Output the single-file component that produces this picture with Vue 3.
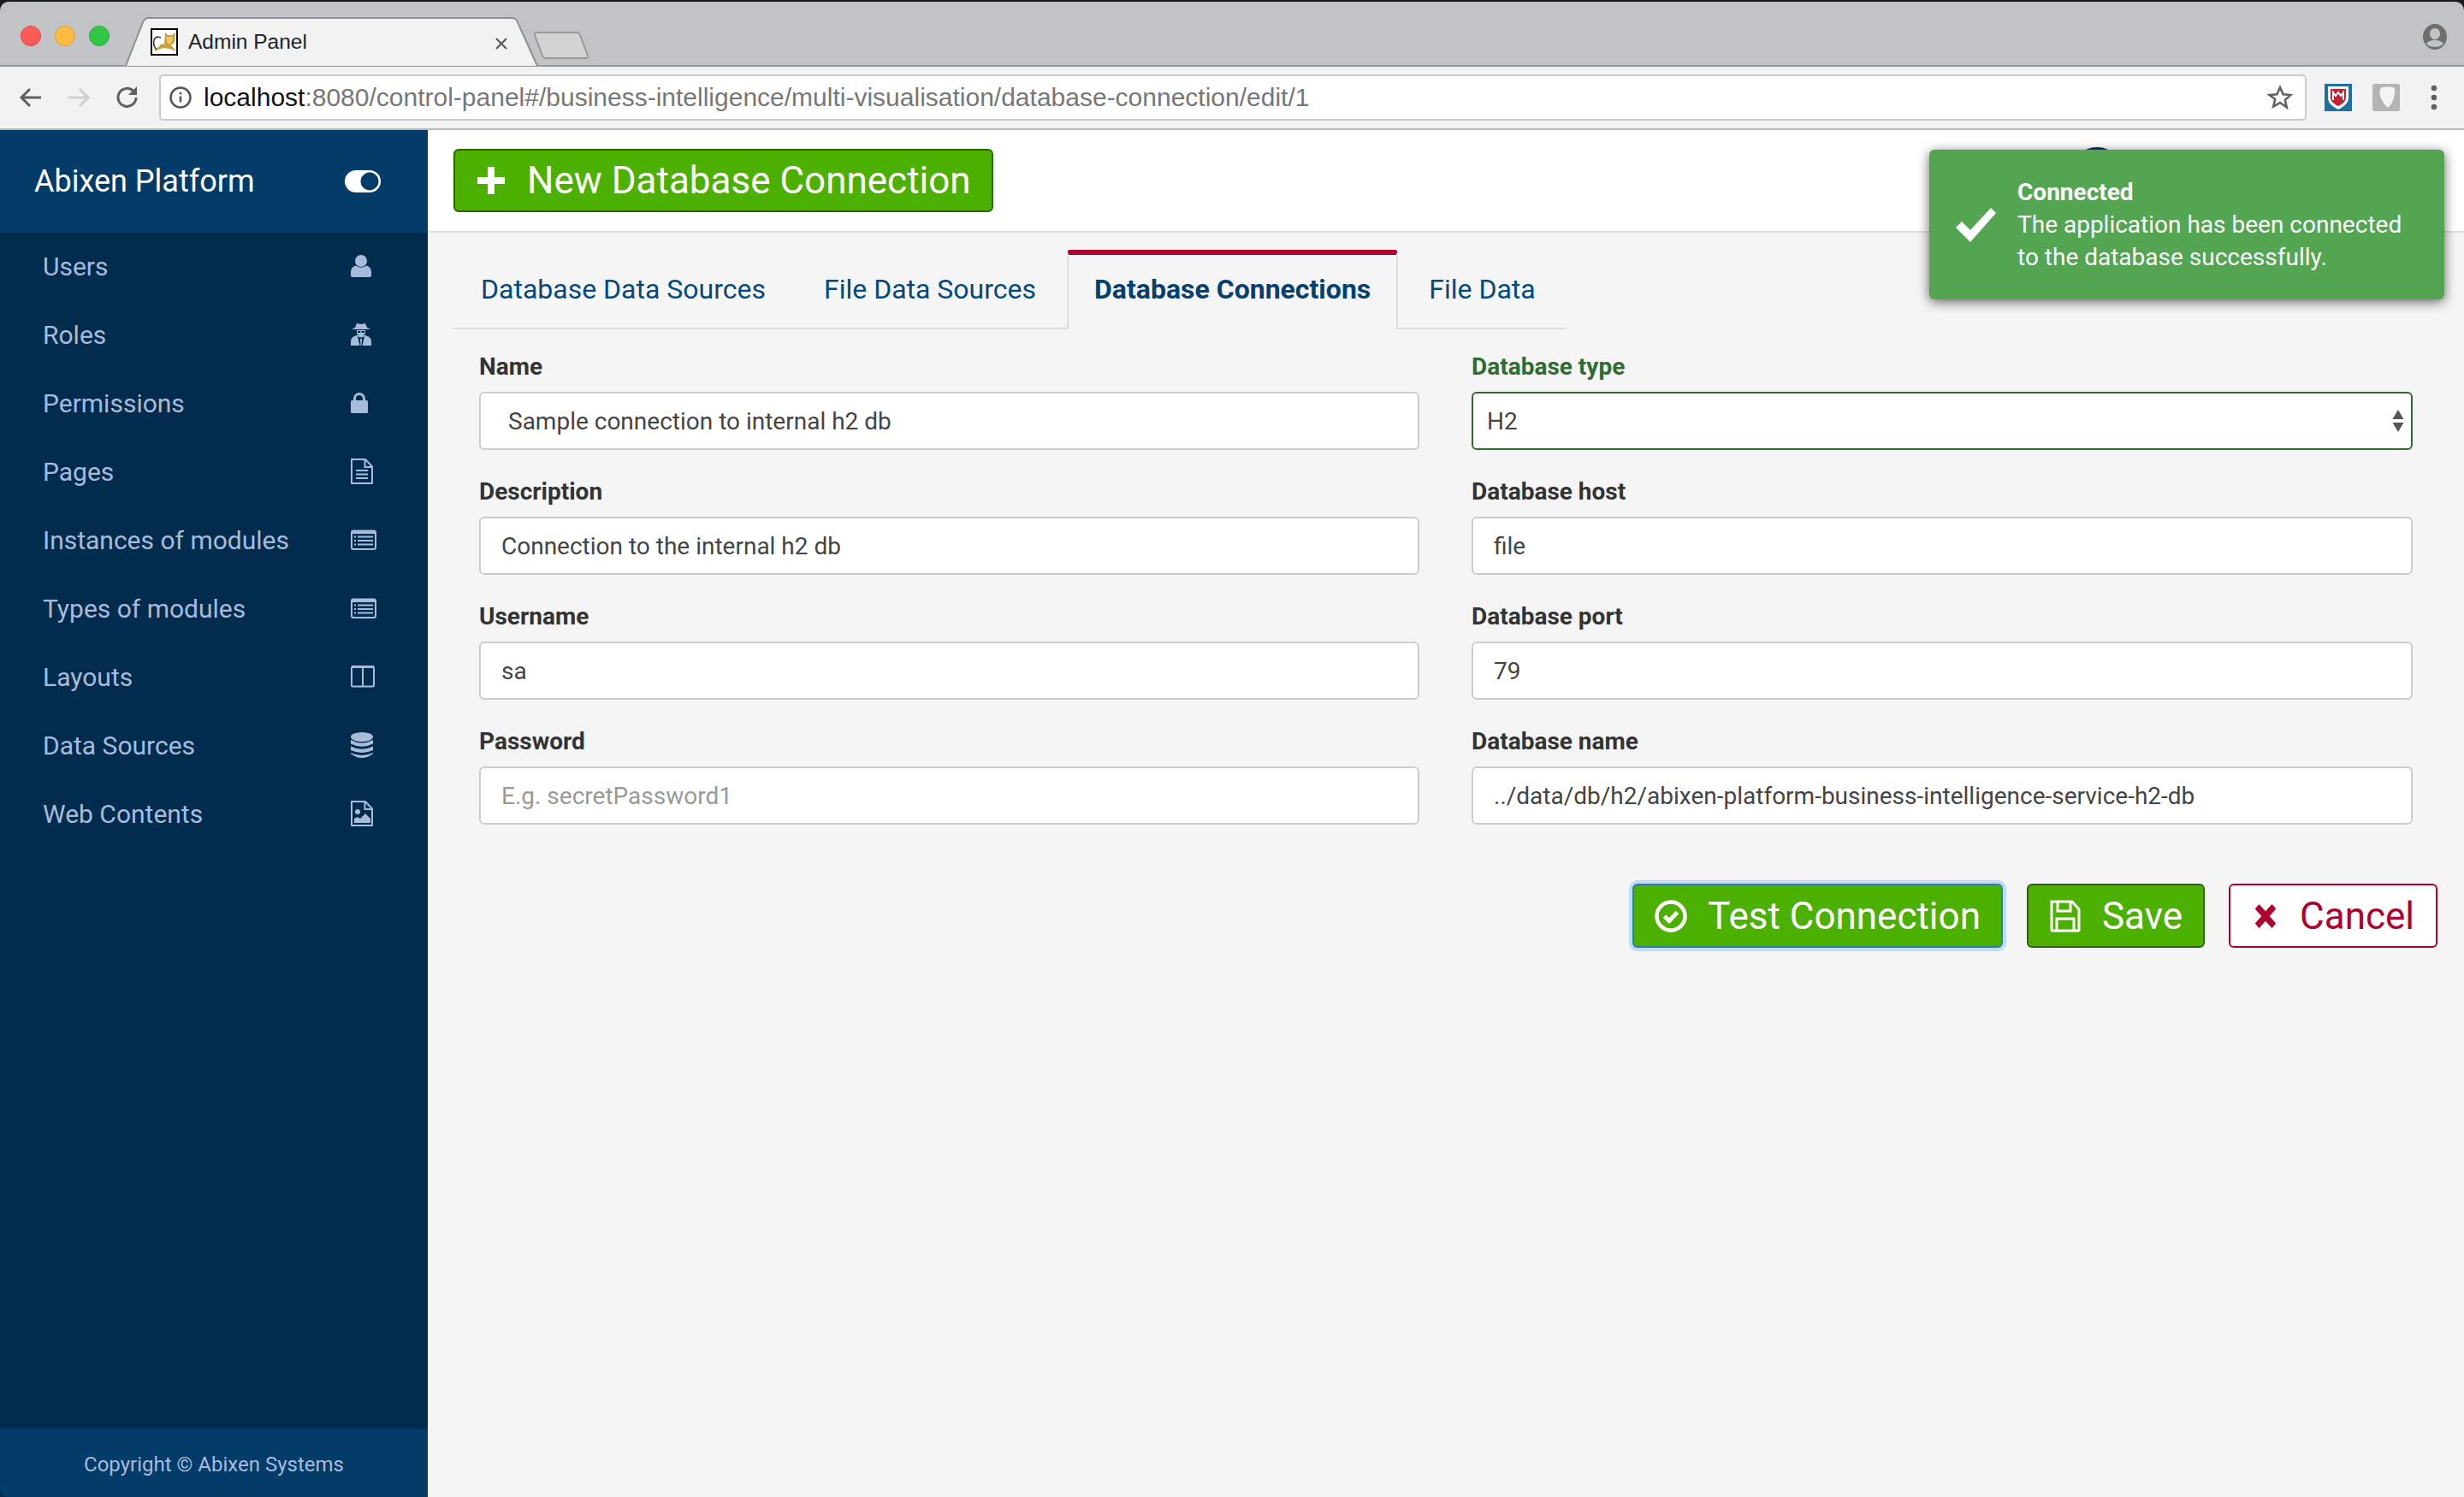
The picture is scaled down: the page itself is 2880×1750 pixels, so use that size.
<template>
  <div class="window">
    <div class="tabstrip">
      <div class="lights">
        <span class="light red"></span>
        <span class="light yellow"></span>
        <span class="light green"></span>
      </div>
      <div class="tab">
        <svg class="tab-shape" width="490" height="58" viewBox="0 0 490 58">
          <path d="M1 57 L21 6 Q23 1 28 1 L452 1 Q457 1 459 6 L482 57" fill="#f2f2f2" stroke="#8f9094" stroke-width="2" />
        </svg>
        <svg class="favicon" width="32" height="32" viewBox="0 0 32 32">
          <rect x="1" y="1" width="30" height="30" fill="#fff" stroke="#000" stroke-width="2" />
          <path d="M4 27L13 18 16 19 17 5 20 8H25L29 5 28 16 24 20 30 27 22 24 15 23 9 25Z" fill="#c9a03c" />
          <path d="M18 10h8l-1 6-3 3-3-3z" fill="#eec65a" />
          <path d="M7 25C2 20 3 11 8 10L12 11" fill="none" stroke="#333" stroke-width="1.500" />
        </svg>
        <span class="tab-title">Admin Panel</span>
        <svg class="tab-close" width="16" height="16" viewBox="0 0 16 16">
          <path d="M2 2l12 12M14 2L2 14" stroke="#555" stroke-width="2" />
        </svg>
      </div>
      <svg class="newtab" width="66" height="34" viewBox="0 0 66 34">
        <path d="M2 5Q1 2 5 2L51 2Q54 2 55 5L64 29Q65 32 61 32L15 32Q12 32 11 29Z" fill="#d2d3d5" stroke="#97989c" stroke-width="2" />
      </svg>
      <svg class="profile" width="30" height="32" viewBox="0 0 30 32">
        <path fill="#6e6e70" fill-rule="evenodd" d="M15 1C23 1 29 8 29 16S23 31 15 31 1 24 1 16 7 1 15 1ZM15 6a6 6.500 0 1 0 .01 0ZM15 20C10 20 6 22 5 24 8 27 11 28 15 28S22 27 25 24C24 22 20 20 15 20Z" />
      </svg>
    </div>

    <div class="toolbar">
      <svg class="tool" width="28" height="28" viewBox="0 0 28 28">
        <path d="M26 14H4M13 4L3 14l10 10" fill="none" stroke="#5f6063" stroke-width="3" />
      </svg>
      <svg class="tool" width="28" height="28" viewBox="0 0 28 28">
        <path d="M2 14h22M15 4l10 10-10 10" fill="none" stroke="#cfcfcf" stroke-width="3" />
      </svg>
      <svg class="tool" width="30" height="30" viewBox="0 0 30 30">
        <path d="M25 15a10.500 10.500 0 1 1-3-7.500" fill="none" stroke="#5f6063" stroke-width="3" />
        <path d="M26 2v10H16z" fill="#5f6063" />
      </svg>
      <div class="omnibox">
        <svg width="26" height="26" viewBox="0 0 26 26">
          <circle cx="13" cy="13" r="11.500" fill="none" stroke="#555" stroke-width="2.500" />
          <path d="M13 11.500v7M13 7v2.500" stroke="#555" stroke-width="2.500" />
        </svg>
        <span class="url"><b>localhost</b>:8080/control-panel#/business-intelligence/multi-visualisation/database-connection/edit/1</span>
        <svg class="star" width="30" height="30" viewBox="0 0 30 30">
          <path d="M15 3l3.600 8.200 8.900.800-6.700 5.900 2 8.700L15 21.100l-7.800 4.500 2-8.700L2.500 12l8.900-.800z" fill="none" stroke="#5f6063" stroke-width="2.500" />
        </svg>
      </div>
      <svg class="ext" width="32" height="32" viewBox="0 0 32 32">
        <rect width="32" height="32" fill="#1f6f9f" />
        <path d="M4 3h24v13c0 7-6 11-12 14C10 27 4 23 4 16z" fill="#fff" />
        <path d="M7 6h18v10c0 5-5 8-9 10-4-2-9-5-9-10z" fill="#c01f35" />
        <path d="M10 19v-9l3 4 3-4 3 4 3-4v9" fill="none" stroke="#fff" stroke-width="2" />
      </svg>
      <svg class="ext" width="32" height="32" viewBox="0 0 32 32">
        <rect width="32" height="32" rx="3" fill="#b4b4b4" />
        <path d="M11 4C17 3 25 3 26 6c1 8-3 18-8 22C11 22 5 9 11 4z" fill="#f4f4f4" />
      </svg>
      <svg class="dots" width="8" height="30" viewBox="0 0 8 30">
        <circle cx="4" cy="4" r="3.300" fill="#5f6063" />
        <circle cx="4" cy="15" r="3.300" fill="#5f6063" />
        <circle cx="4" cy="26" r="3.300" fill="#5f6063" />
      </svg>
    </div>

    <div class="app">
      <aside class="sidebar">
        <div class="brand">
          <span>Abixen Platform</span>
          <svg width="42" height="26" viewBox="0 0 42 26">
            <path fill="#fff" fill-rule="evenodd" d="M13 0H29A13 13 0 0 1 29 26H13A13 13 0 0 1 13 0ZM29 2.500a10.500 10.500 0 1 0 .01 0Z" />
          </svg>
        </div>
        <nav class="menu">
          <a v-for="item in menu" :key="item.label" class="menu-item">
            <span>{{ item.label }}</span>
            <svg class="menu-icon" width="30" height="30" viewBox="0 0 30 30" v-html="icons[item.icon]"></svg>
          </a>
        </nav>
        <div class="copyright">Copyright © Abixen Systems</div>
      </aside>

      <main class="main">
        <header class="topbar">
          <button class="btn primary big">
            <svg width="36" height="36" viewBox="0 0 36 36">
              <path d="M14 2h8v12h12v8H22v12h-8V22H2v-8h12z" fill="#fff" />
            </svg>
            New Database Connection
          </button>
          <span class="avatar"></span>
        </header>

        <section class="content">
          <div class="tabs">
            <a v-for="t in tabs" :key="t" class="tab-link" :class="{ active: t === 'Database Connections' }">{{ t }}</a>
          </div>

          <form class="form" @submit.prevent>
            <div v-for="f in fields" :key="f.label" class="field" :class="{ ok: f.select }">
              <label>{{ f.label }}</label>
              <div v-if="f.select" class="select">
                <select>
                  <option>{{ f.value }}</option>
                </select>
                <svg width="14" height="26" viewBox="0 0 14 26">
                  <path d="M7 0l6.500 11H.5zM7 26l6.500-11H.5z" fill="#555" />
                </svg>
              </div>
              <input v-else type="text" :class="{ indent: f.indent }" :value="f.value" :placeholder="f.placeholder" />
            </div>
          </form>

          <div class="actions">
            <button class="btn primary focused">
              <svg width="38" height="38" viewBox="0 0 38 38">
                <circle cx="19" cy="19" r="16.500" fill="none" stroke="#fff" stroke-width="4.500" />
                <path d="M11.500 19l5.500 5.500 9.500-10" fill="none" stroke="#fff" stroke-width="5" />
              </svg>
              Test Connection
            </button>
            <button class="btn primary">
              <svg width="38" height="38" viewBox="0 0 38 38">
                <path d="M3 2H27L35 11V35Q35 36 34 36H4Q3 36 3 35Z" fill="none" stroke="#fff" stroke-width="3" />
                <path d="M10 3V13H25V3M9 36V22H29V36" fill="none" stroke="#fff" stroke-width="3" />
              </svg>
              Save
            </button>
            <button class="btn cancel">
              <svg width="32" height="32" viewBox="0 0 32 34">
                <path d="M3 8L8 2 16 11 24 2 29 8 21 17 29 26 24 32 16 23 8 32 3 26 11 17Z" fill="#b0002e" />
              </svg>
              Cancel
            </button>
          </div>
        </section>

        <div class="toast">
          <svg width="50" height="42" viewBox="0 0 50 42">
            <path d="M2 24l7-7 10 10L43 1l6 6-30 34z" fill="#fff" />
          </svg>
          <div class="toast-text">
            <strong>Connected</strong>
            <p>The application has been connected<br />to the database successfully.</p>
          </div>
        </div>
      </main>
    </div>
  </div>
</template>

<script setup>
const menu = [
  { label: 'Users', icon: 'user' },
  { label: 'Roles', icon: 'spy' },
  { label: 'Permissions', icon: 'lock' },
  { label: 'Pages', icon: 'file' },
  { label: 'Instances of modules', icon: 'list' },
  { label: 'Types of modules', icon: 'list' },
  { label: 'Layouts', icon: 'columns' },
  { label: 'Data Sources', icon: 'database' },
  { label: 'Web Contents', icon: 'image' }
]

// wszystkie ikony w viewBox 30x30, wysrodkowane w pionie
const icons = {
  user: '<circle cx="12" cy="9" r="7" fill="currentColor"/><path d="M0 26Q0 28 2 28H22Q24 28 24 26V22Q24 16 18 14.500Q12 19 6 14.500Q0 16 0 22Z" fill="currentColor"/>',
  spy: '<path d="M5 7L7 2L12 3L17 2L19 7L23 9H1Z" fill="currentColor"/><path d="M7 10H17V13Q17 16 12 16.500Q7 16 7 13Z" fill="currentColor"/><path d="M8 11H11.300V13H8ZM12.700 11H16V13H12.700Z" fill="#012c4e"/><path d="M0 28V23Q0 18 7 16H17Q24 18 24 23V28Z" fill="currentColor"/><path d="M8 17L10.500 28H11.500L11 20H13L12.500 28H13.500L16 17L13 18.500H11Z" fill="#012c4e"/>',
  lock: '<path d="M4.500 14V10A5.500 5.500 0 0 1 15.500 10V14" fill="none" stroke="currentColor" stroke-width="3"/><rect x="0" y="12" width="20" height="15" rx="1.500" fill="currentColor"/>',
  file: '<path d="M1 1H17L25 9.500V29H1Z" fill="none" stroke="currentColor" stroke-width="2" stroke-linejoin="round"/><path d="M16.500 1V10H25M6 14H20M6 18.500H20M6 23H20" fill="none" stroke="currentColor" stroke-width="2"/>',
  list: '<rect x="1" y="4.500" width="28" height="21.500" rx="2" fill="none" stroke="currentColor" stroke-width="2"/><rect x="1" y="4" width="28" height="4" fill="currentColor"/><path d="M8 11.500H26M8 16H26M8 20.500H26M4 11.500H6M4 16H6M4 20.500H6" fill="none" stroke="currentColor" stroke-width="2"/>',
  columns: '<rect x="1" y="3.500" width="26" height="23" rx="1.500" fill="none" stroke="currentColor" stroke-width="2"/><path d="M14 3.500V26.500" stroke="currentColor" stroke-width="2"/><path d="M1 3.500H27" stroke="currentColor" stroke-width="3"/>',
  database: '<ellipse cx="13" cy="5.500" rx="13" ry="5.500" fill="currentColor"/><path d="M0 9Q13 16 26 9V13.500Q13 20 0 13.500ZM0 16.500Q13 23 26 16.500V21Q13 27 0 21ZM0 24Q13 30 26 24V25Q20 30 13 30T0 25Z" fill="currentColor"/>',
  image: '<path d="M1 1H17L25 9.500V29H1Z" fill="none" stroke="currentColor" stroke-width="2" stroke-linejoin="round"/><path d="M16.500 1V10H25" fill="none" stroke="currentColor" stroke-width="2"/><circle cx="8" cy="13" r="3" fill="currentColor"/><path d="M4 26V21L8 19 11 21 17 15 23 21V26Z" fill="currentColor"/>'
}

const tabs = ['Database Data Sources', 'File Data Sources', 'Database Connections', 'File Data']

// kolejnosc: lewa i prawa kolumna na przemian, tak jak w siatce formularza
const fields = [
  { label: 'Name', value: 'Sample connection to internal h2 db', indent: true },
  { label: 'Database type', value: 'H2', select: true },
  { label: 'Description', value: 'Connection to the internal h2 db' },
  { label: 'Database host', value: 'file' },
  { label: 'Username', value: 'sa' },
  { label: 'Database port', value: '79' },
  { label: 'Password', value: '', placeholder: 'E.g. secretPassword1' },
  { label: 'Database name', value: '../data/db/h2/abixen-platform-business-intelligence-service-h2-db' }
]
</script>

<style>
html,
body {
  margin: 0;
  background: #1b1b1f;
}
</style>

<style scoped>
.window {
  width: 2880px;
  height: 1750px;
  padding-top: 2px;
  box-sizing: border-box;
  display: flex;
  flex-direction: column;
  font-family: Roboto, "Liberation Sans", sans-serif;
  overflow: hidden;
}

.tabstrip {
  height: 76px;
  flex: none;
  position: relative;
  display: flex;
  box-sizing: border-box;
  background: #c2c3c6;
  border-bottom: 2px solid #97989c;
  border-radius: 10px 10px 0 0;
}

.lights {
  display: flex;
  gap: 16px;
  margin: 28px 0 0 24px;
}

.light {
  width: 24px;
  height: 24px;
  border-radius: 50%;
  box-sizing: border-box;
}

.red { background: #fc5b57; border: 1px solid #df4744; }
.yellow { background: #fdbc40; border: 1px solid #dea034; }
.green { background: #33c748; border: 1px solid #27aa35; }

.tab {
  width: 482px;
  height: 58px;
  margin: 18px 0 0 18px;
  position: relative;
  display: flex;
  align-items: center;
  padding: 0 0 0 30px;
  box-sizing: border-box;
}

.tab-shape {
  position: absolute;
  left: 0;
  top: 0;
}

.favicon,
.tab-title {
  position: relative;
}

.tab-title {
  margin-left: 12px;
  font: 24.500px "Liberation Sans", sans-serif;
  color: #222;
}

.tab-close {
  position: absolute;
  left: 432px;
  top: 23px;
}

.newtab {
  margin: 34px 0 0 -5px;
}

.profile {
  position: absolute;
  right: 19px;
  top: 25px;
}

.toolbar {
  height: 74px;
  flex: none;
  box-sizing: border-box;
  display: flex;
  align-items: center;
  background: #f2f2f2;
  border-bottom: 2px solid #b9b9bb;
  padding-left: 22px;
}

.tool {
  margin-right: 28px;
}

.tool + .tool + .tool {
  margin-right: 22px;
}

.omnibox {
  width: 2510px;
  height: 54px;
  box-sizing: border-box;
  display: flex;
  align-items: center;
  gap: 14px;
  padding: 0 14px 0 10px;
  background: #fff;
  border: 2px solid #c9c9c9;
  border-radius: 5px;
}

.url {
  flex: 1;
  font: 30px "Liberation Sans", sans-serif;
  color: #777;
  white-space: nowrap;
}

.url b {
  font-weight: 400;
  color: #111;
}

.ext {
  margin-left: 21px;
}

.ext + .ext {
  margin-left: 24px;
}

.dots {
  margin-left: 36px;
}

.app {
  flex: 1;
  display: flex;
  min-height: 0;
}

.sidebar {
  width: 500px;
  flex: none;
  display: flex;
  flex-direction: column;
  background: #012c4e;
}

.brand {
  height: 120px;
  flex: none;
  box-sizing: border-box;
  display: flex;
  align-items: center;
  justify-content: space-between;
  padding: 0 55px 0 40px;
  background: #033c69;
  color: #fff;
  font-size: 36px;
}

.menu {
  flex: 1;
}

.menu-item {
  height: 80px;
  box-sizing: border-box;
  display: flex;
  align-items: center;
  justify-content: space-between;
  padding: 0 60px 2px 50px;
  color: #a9bbdb;
  font-size: 30px;
}

.menu-icon {
  margin-top: -1px;
}

.copyright {
  height: 80px;
  flex: none;
  box-sizing: border-box;
  padding-top: 3px;
  display: flex;
  align-items: center;
  justify-content: center;
  background: #033c69;
  color: #a9bbdb;
  font-size: 24px;
  border-bottom-left-radius: 10px;
}

.main {
  flex: 1;
  position: relative;
  background: #f5f5f5;
}

.topbar {
  height: 120px;
  box-sizing: border-box;
  display: flex;
  align-items: flex-start;
  padding: 22px 30px 0 30px;
  background: #fff;
  border-bottom: 2px solid #dedede;
}

.btn {
  display: inline-flex;
  align-items: center;
  gap: 24px;
  height: 75px;
  padding: 0 24px;
  box-sizing: border-box;
  border-radius: 6px;
  font: 44px Roboto, sans-serif;
  cursor: pointer;
}

.primary {
  background: #4cb000;
  border: 2px solid #2c6600;
  color: #fff;
}

.big {
  height: 74px;
}

.cancel {
  padding: 0 25px;
  background: #fff;
  border: 2px solid #b0002e;
  color: #b0002e;
}

.focused {
  border-color: #2f7ea5;
  box-shadow: 0 0 0 4px #bcdcfa;
}

.avatar {
  position: absolute;
  left: 1921px;
  top: 20px;
  width: 60px;
  height: 60px;
  border: 3px solid #14385a;
  border-radius: 50%;
  box-sizing: border-box;
}

.content {
  padding: 20px 30px 0 30px;
}

.tabs {
  display: flex;
  height: 93px;
}

.tab-link {
  height: 93px;
  box-sizing: border-box;
  padding: 27px 36px 0 32px;
  color: #03497d;
  font-size: 32px;
  border-bottom: 2px solid #dedede;
}

.tab-link.active {
  padding: 21px 30px 0;
  font-weight: 700;
  color: #034070;
  background: #f5f5f5;
  border: 2px solid #dedede;
  border-top: 6px solid #b0002e;
  border-bottom: 0;
  border-radius: 4px 4px 0 0;
}

.tab-link:last-child {
  padding-left: 36px;
}

.form {
  display: grid;
  grid-template-columns: 1099px 1100px;
  column-gap: 61px;
  row-gap: 28px;
  padding: 23px 0 0 30px;
}

.field label {
  display: block;
  height: 50px;
  box-sizing: border-box;
  padding-top: 4px;
  font-size: 28px;
  font-weight: 700;
  color: #333;
}

.field input,
.field select {
  width: 100%;
  height: 68px;
  box-sizing: border-box;
  padding: 0 24px;
  font: 28px Roboto, sans-serif;
  color: #444;
  background: #fff;
  border: 2px solid #ccc;
  border-radius: 6px;
  outline: none;
}

.field input.indent {
  padding-left: 32px;
}

.field input::placeholder {
  color: #999;
}

.field.ok label {
  color: #2e6d2e;
}

.select {
  position: relative;
}

.field select {
  appearance: none;
  border-color: #2e6d2e;
  padding-left: 16px;
}

.select svg {
  position: absolute;
  right: 10px;
  top: 21px;
}

.actions {
  display: flex;
  justify-content: flex-end;
  gap: 28px;
  margin-top: 69px;
  margin-right: 1px;
}

.toast {
  position: absolute;
  left: 1755px;
  top: 23px;
  width: 602px;
  height: 175px;
  box-sizing: border-box;
  display: flex;
  align-items: center;
  gap: 24px;
  padding: 0 0 0 29px;
  background: #53a551;
  border-radius: 6px;
  color: #fff;
  box-shadow: 0 3px 14px rgba(0, 0, 0, 0.6);
  font-size: 28px;
  line-height: 38px;
}

.toast-text p {
  margin: 0;
}

.toast-text strong {
  display: block;
}
</style>
